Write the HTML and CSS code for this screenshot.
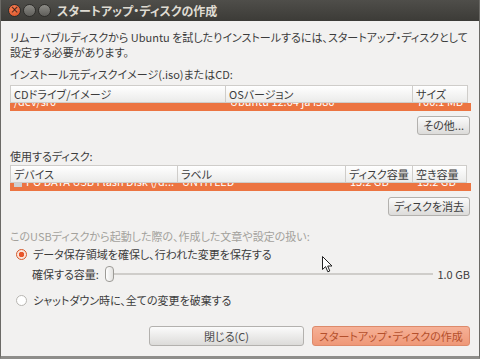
FILE: index.html
```html
<!DOCTYPE html>
<html lang="ja">
<head>
    <meta charset="UTF-8">
    <title>スタートアップ・ディスクの作成</title>
    <link rel="stylesheet" href="styles.css">
</head>
<body>
<div class="window">
    <div class="titlebar">
        <div class="controls">
            <span class="ctl close">×</span>
            <span class="ctl min"></span>
            <span class="ctl max"></span>
        </div>
        <div class="title">スタートアップ・ディスクの作成</div>
    </div>

    <div class="content">
        <p class="intro">リムーバブルディスクから Ubuntu を試したりインストールするには、スタートアップ・ディスクとして<br>設定する必要があります。</p>

        <div class="label label-src">インストール元ディスクイメージ(.iso)またはCD:</div>
        <div class="list list-src">
            <div class="head">
                <span>CDドライブ/イメージ</span>
                <span>OSバージョン</span>
                <span>サイズ</span>
            </div>
            <div class="row">
                <div class="row-inner">
                    <span>/dev/sr0</span>
                    <span>Ubuntu 12.04 ja i386</span>
                    <span>700.1 MB</span>
                </div>
            </div>
        </div>
        <div class="btn-line line-other"><button class="btn">その他...</button></div>

        <div class="label label-dst">使用するディスク:</div>
        <div class="list list-dst">
            <div class="head">
                <span>デバイス</span>
                <span>ラベル</span>
                <span>ディスク容量</span>
                <span>空き容量</span>
            </div>
            <div class="row">
                <div class="row-inner">
                    <span><i class="dev-icon"></i>I-O DATA USB Flash Disk (/d...</span>
                    <span>UNTITLED</span>
                    <span>15.2 GB</span>
                    <span>15.2 GB</span>
                </div>
            </div>
        </div>
        <div class="btn-line line-erase"><button class="btn">ディスクを消去</button></div>

        <div class="label label-dim">このUSBディスクから起動した際の、作成した文章や設定の扱い:</div>

        <div class="option opt-keep">
            <span class="radio checked"></span>
            データ保存領域を確保し、行われた変更を保存する
        </div>
        <div class="size-row">
            <span>確保する容量:</span>
            <div class="slider">
                <span class="knob"></span>
                <span class="track"></span>
            </div>
            <span class="size-val">1.0 GB</span>
        </div>
        <div class="option opt-discard">
            <span class="radio"></span>
            シャットダウン時に、全ての変更を破棄する
        </div>

        <div class="actions">
            <button class="btn btn-close">閉じる(C)</button>
            <button class="btn btn-make">スタートアップ・ディスクの作成</button>
        </div>
    </div>

    <svg class="cursor" width="11" height="17" viewBox="0 0 11 17">
        <path d="M0.5 0.5 L0.5 13.5 L3.6 10.6 L5.8 15.8 L7.8 15 L5.7 10 L10 10 Z" fill="#fff" stroke="#222" stroke-width="1"/>
    </svg>
</div>
</body>
</html>
```

FILE: styles.css
```css
body {
    margin: 0;
    font-family: "Noto Sans CJK JP", "Noto Sans", sans-serif;
    font-feature-settings: "palt";
    font-size: 11px;
    color: #3c3c3c;
    background: #2b2a27;
}

.window {
    position: relative;
    width: 480px;
    height: 359px;
    box-sizing: border-box;
    background: #f2f1f0;
    border-left: 1px solid #6b6a66;
    border-right: 1px solid #6b6a66;
    border-bottom: 3px solid #8e8d8a;
}

/* title bar */
.titlebar {
    height: 21px;
    display: flex;
    align-items: center;
    background: linear-gradient(#4f4e4a, #3c3b37);
}
.controls {
    display: flex;
    gap: 2px;
    margin-left: 7px;
    width: 48px;
}
.ctl {
    width: 11px;
    height: 11px;
    border-radius: 50%;
    background: linear-gradient(#8c8b86, #5f5e5a);
    border: 1px solid #2e2d2a;
    font-size: 10px;
    line-height: 10px;
    text-align: center;
    color: #3a1a10;
    font-family: "DejaVu Sans", sans-serif;
}
.ctl.close {
    background: radial-gradient(circle at 40% 35%, #f7855c, #d94a1e);
}
.title {
    color: #dfdbd2;
    font-size: 12px;
    font-weight: bold;
    margin-left: 1px;
}

/* content */
.content {
    padding: 0 9px;
}
.intro {
    margin: 9px 0 0;
    line-height: 15px;
}
.label {
    line-height: 15px;
}
.label-src { margin-top: 7px; }
.label-dst { margin-top: 14px; }
.label-dim { margin-top: 13px; color: #a3a19c; }

/* tree lists */
.list {
    margin-top: 3px;
    background: #f2f1f0;
}
.list-dst { margin-top: 1px; }
.head, .row-inner {
    display: grid;
}
.list-src .head, .list-src .row-inner {
    grid-template-columns: 216px 187px 55px;
}
.list-dst .head, .list-dst .row-inner {
    grid-template-columns: 168px 168px 67px 54px;
}
.head {
    height: 18px;
    position: relative;
    z-index: 1;
}
.head span {
    background: linear-gradient(#ffffff, #ebebea);
    border: 1px solid #cfcdca;
    border-left: none;
    padding-left: 3px;
    line-height: 16px;
    color: #3c3c3c;
}
.head span:first-child {
    border-left: 1px solid #cfcdca;
}
.row {
    height: 8px;
    overflow: hidden;
    background: #ec7441;
    margin-right: -1px;
}
.row-inner {
    margin-top: -9px;
    line-height: 15px;
    color: #fff;
}
.row-inner span {
    padding-left: 4px;
    white-space: nowrap;
    overflow: hidden;
}
.dev-icon {
    display: inline-block;
    width: 8px;
    height: 10px;
    background: #cfcfcf;
    margin-right: 4px;
    vertical-align: -1px;
}

/* buttons */
.btn-line {
    display: flex;
    justify-content: flex-end;
}
.line-other { margin-top: 5px; }
.line-erase { margin-top: 6px; }
.btn {
    font-family: inherit;
    font-feature-settings: "palt";
    font-size: 11px;
    height: 19px;
    padding: 0 5px;
    color: #3c3c3c;
    background: linear-gradient(#fbfbfb, #dcdbd9);
    border: 1px solid #b3b1ae;
    border-radius: 3px;
    line-height: 17px;
}

/* options */
.option {
    display: flex;
    align-items: center;
    line-height: 15px;
    padding-left: 6px;
}
.opt-keep { margin-top: 3px; }
.opt-discard { margin-top: 12px; }
.radio {
    width: 9px;
    height: 9px;
    border-radius: 50%;
    border: 1px solid #b8b6b2;
    background: #fff;
    margin-right: 6px;
    box-sizing: content-box;
}
.radio.checked {
    border-color: #d55a2c;
    background: radial-gradient(circle, #e8552a 0 2.5px, #fbe3d8 3px);
}

.size-row {
    display: flex;
    align-items: center;
    margin-top: 4px;
    height: 15px;
    padding-left: 22px;
}
.slider {
    flex: 1;
    display: flex;
    align-items: center;
    margin-left: 6px;
}
.knob {
    width: 7px;
    height: 14px;
    border: 1px solid #9d9b97;
    border-radius: 4px;
    background: linear-gradient(90deg, #ffffff, #e2e1df);
}
.track {
    flex: 1;
    height: 2px;
    background: #cfcdca;
}
.size-val {
    margin-left: 4px;
}

.actions {
    display: flex;
    justify-content: flex-end;
    gap: 8px;
    margin-top: 18px;
}
.actions .btn {
    height: 20px;
    line-height: 18px;
}
.btn-close {
    width: 155px;
    color: #4a4a4a;
}
.btn-make {
    width: 158px;
    color: #b4502c;
    background: linear-gradient(#f6b197, #ef9877);
    border-color: #dd8a6b;
}

.cursor {
    position: absolute;
    left: 321px;
    top: 256px;
}
```
